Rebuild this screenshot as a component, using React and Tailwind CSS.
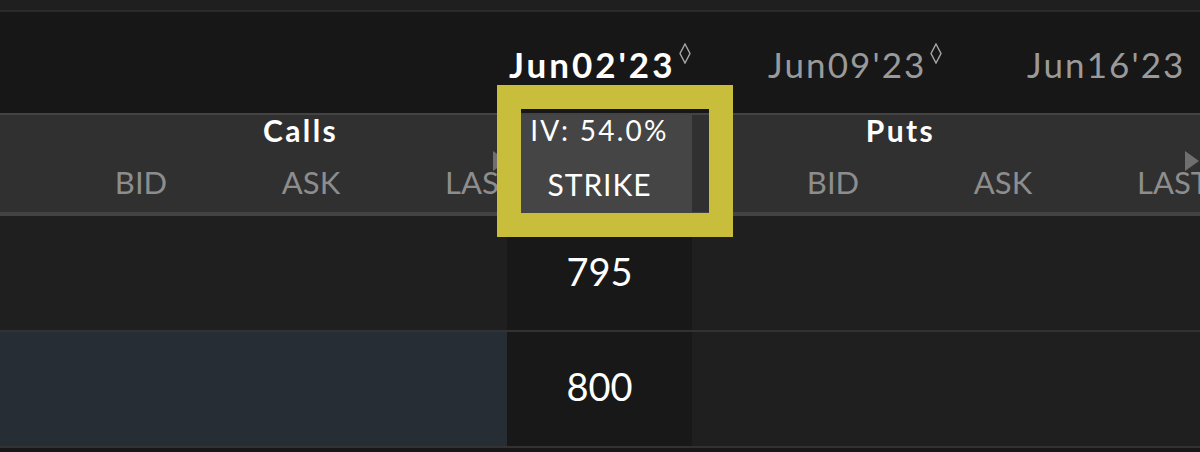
import React from "react";

const font = { fontFamily: "Lato, 'Open Sans', sans-serif" };

function Diamond() {
  return (
    <svg width="12" height="21" viewBox="0 0 12 21" className="shrink-0 -mt-[4px] ml-[4px]">
      <polygon points="6,1 11,10.5 6,20 1,10.5" fill="none" stroke="#a8a8a8" strokeWidth="1.4" />
    </svg>
  );
}

function SortArrow() {
  return (
    <svg width="14" height="20" viewBox="0 0 14 20" className="absolute left-[97px] -top-[16px]">
      <polygon points="0,0 14,10 0,20" fill="#6f6f6f" />
    </svg>
  );
}

function ColumnHeads() {
  const cols = ["BID", "ASK", "LAST"];
  return (
    <div className="mt-[22px] ml-[56px] flex text-[31px] leading-none text-[#8d8d8d]">
      {cols.map((c) => (
        <div key={c} className="relative w-[170px] shrink-0 text-center">
          {c}
          {c === "LAST" && <SortArrow />}
        </div>
      ))}
    </div>
  );
}

export default function App() {
  const dates = [
    { label: "Jun02'23", active: true, mark: true },
    { label: "Jun09'23", active: false, mark: true },
    { label: "Jun16'23", active: false, mark: false },
  ];

  const rows = [
    { strike: "795", left: "bg-[#1f1f1f]", pt: "pt-[36px]" },
    { strike: "800", left: "bg-[#272d34]", pt: "pt-[35px]" },
  ];

  return (
    <div className="relative w-[1200px] h-[452px] overflow-hidden bg-[#171717] text-white" style={font}>
      {/* top strip */}
      <div className="h-[12px] bg-[#1f1f1f] border-b-2 border-[#2a2a2a]" />

      {/* expiry tabs */}
      <div className="h-[101px] flex pl-[509px] pt-[35px]">
        {dates.map((d) => (
          <div key={d.label} className="w-[259px] shrink-0 flex items-start">
            <span
              className={
                d.active
                  ? "text-[35px] leading-none font-bold tracking-[0.085em] text-white"
                  : "text-[35px] leading-none tracking-[0.06em] text-[#9a9a9a]"
              }
            >
              {d.label}
            </span>
            {d.mark && <Diamond />}
          </div>
        ))}
      </div>

      {/* header band */}
      <div className="h-[103px] flex bg-[#303030] border-t-2 border-b-4 border-[#434343]">
        <div className="w-[507px] shrink-0 flex flex-col">
          <div className="ml-[56px] w-[489px] text-center text-[30px] leading-none font-bold tracking-[0.08em]">
            Calls
          </div>
          <ColumnHeads />
        </div>
        <div className="w-[185px] shrink-0 bg-[#454545] flex flex-col items-center">
          <div className="mt-[1px] text-[28px] leading-none tracking-[0.08em]">IV: 54.0%</div>
          <div className="mt-[25px] text-[30px] leading-none tracking-[0.03em]">STRIKE</div>
        </div>
        <div className="flex-1 flex flex-col">
          <div className="ml-[56px] w-[305px] text-center text-[30px] leading-none font-bold tracking-[0.08em]">
            Puts
          </div>
          <ColumnHeads />
        </div>
      </div>

      {/* strike rows */}
      {rows.map((r) => (
        <div key={r.strike} className="h-[116px] flex border-b-2 border-[#323232]">
          <div className={`w-[507px] shrink-0 ${r.left}`} />
          <div className={`w-[185px] shrink-0 bg-[#181818] flex justify-center ${r.pt}`}>
            <span className="text-[38px] leading-none">{r.strike}</span>
          </div>
          <div className="flex-1 bg-[#1f1f1f]" />
        </div>
      ))}

      {/* highlight frame */}
      <div className="absolute left-[497px] top-[85px] w-[236px] h-[152px] border-[24px] border-[#c8be3b]" />
    </div>
  );
}
